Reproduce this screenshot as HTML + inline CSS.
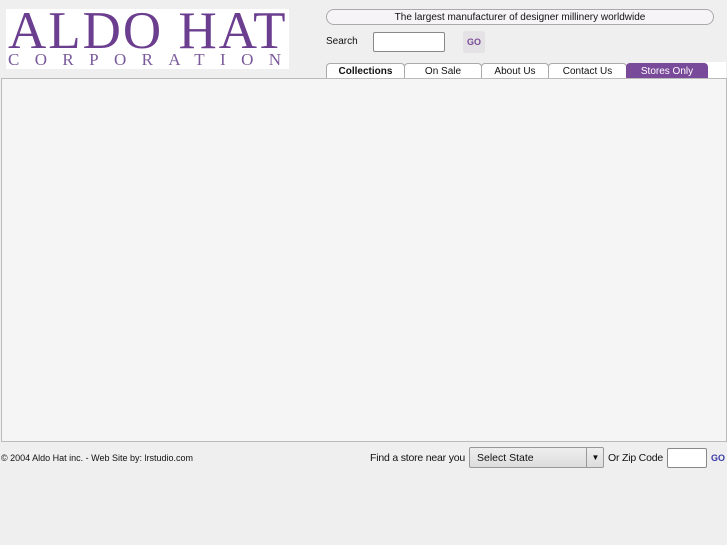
<!DOCTYPE html>
<html><head><style>
body{margin:0;width:727px;height:545px;background:#efefef;font-family:"Liberation Sans",sans-serif;font-size:10px;color:#111;position:relative;overflow:hidden}
.abs{position:absolute}
.logo{left:6px;top:9px;width:283px;height:60px;background:#fff;overflow:hidden}
.big{left:2px;top:-4px;font-family:"Liberation Serif",serif;font-size:53px;color:#6b3e8f;line-height:53px;letter-spacing:2px;white-space:nowrap}
.corp{left:2px;top:42px;font-family:"Liberation Serif",serif;font-size:17px;color:#7a5a9a;letter-spacing:15.4px;line-height:17px;white-space:nowrap}
.tag{left:326px;top:9px;width:386px;height:14px;border:1px solid #aaa;border-radius:8px;background:#f7f4f8;text-align:center;line-height:15px;font-size:10px}
.tab{top:63px;height:14px;border:1px solid #aaa;border-bottom:none;border-radius:4px 4px 0 0;background:#fff;text-align:center;line-height:15px;font-size:10px}
.main{left:1px;top:78px;width:724px;height:362px;border:1px solid #bbb;background:#f5f5f5}
</style></head><body>
<div class="abs logo"><div class="abs big">ALDO HAT</div><div class="abs corp">CORPORATION</div></div>
<div class="abs tag">The largest manufacturer of designer millinery worldwide</div>
<div class="abs" style="left:326px;top:36px">Search</div>
<div class="abs" style="left:373px;top:32px;width:70px;height:18px;border:1px solid #888;border-radius:2px;background:#fff"></div>
<div class="abs" style="left:463px;top:31px;width:22px;height:22px;background:#e4e2e4;border-radius:3px;color:#7a4a9a;font-weight:bold;font-size:9px;text-align:center;line-height:22px">GO</div>
<div class="abs" style="left:706px;top:62px;width:20px;height:16px;background:#fff"></div>
<div class="abs tab" style="left:326px;width:77px;font-weight:bold">Collections</div>
<div class="abs tab" style="left:404px;width:76px">On Sale</div>
<div class="abs tab" style="left:481px;width:66px">About Us</div>
<div class="abs tab" style="left:548px;width:77px">Contact Us</div>
<div class="abs tab" style="left:626px;width:80px;background:#7a4a9a;border-color:#7a4a9a;color:#fff">Stores Only</div>
<div class="abs main"></div>
<div class="abs" style="left:1px;top:453px;font-size:9px">© 2004 Aldo Hat inc. - Web Site by: lrstudio.com</div>
<div class="abs" style="left:370px;top:452px;font-size:10.5px;letter-spacing:-0.2px">Find a store near you</div>
<div class="abs" style="left:469px;top:447px;width:133px;height:19px;border:1px solid #999;border-radius:2px;background:linear-gradient(#eee,#ddd)"><span style="position:absolute;left:7px;top:4px;font-size:10.5px">Select State</span><span style="position:absolute;left:116px;top:0;width:17px;height:19px;border-left:1px solid #999;text-align:center;line-height:19px;font-size:8px">▼</span></div>
<div class="abs" style="left:608px;top:452px;font-size:10.5px;letter-spacing:-0.2px">Or Zip Code</div>
<div class="abs" style="left:667px;top:448px;width:38px;height:18px;border:1px solid #888;border-radius:2px;background:#fff"></div>
<div class="abs" style="left:711px;top:453px;font-size:9px;font-weight:bold;color:#3a3aa8">GO</div>
</body></html>
